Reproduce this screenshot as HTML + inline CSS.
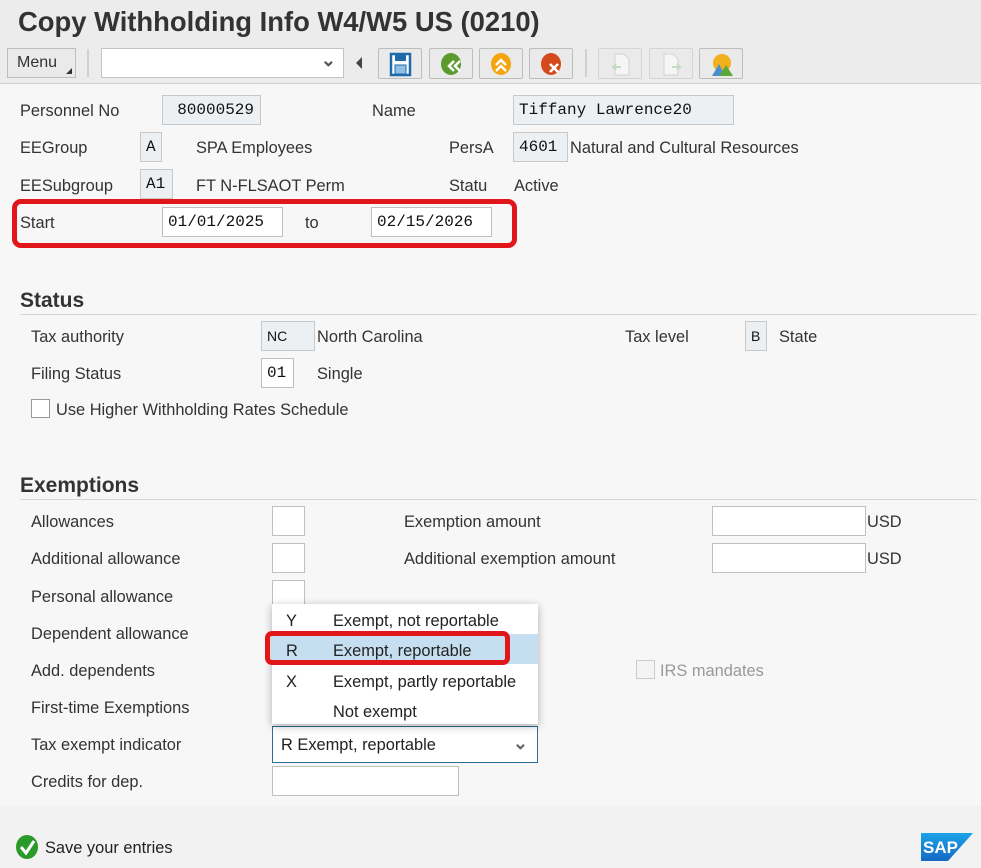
<!DOCTYPE html>
<html><head><style>
*{box-sizing:border-box;margin:0;padding:0}
body{width:981px;height:868px;background:#f7f7f7;font-family:"Liberation Sans",Arial,sans-serif;color:#333;position:relative;overflow:hidden;font-size:16.4px}
.a{position:absolute;white-space:nowrap}
.t{font-size:16.4px;line-height:20px;margin-top:1px}
.ro{position:absolute;background:#edf0f2;border:1px solid #c8c8c8;font-family:"Liberation Mono",monospace;font-size:16px;line-height:28px;padding-left:5px;color:#111}
.in{position:absolute;background:#fff;border:1px solid #bfbfbf;font-family:"Liberation Mono",monospace;font-size:16px;line-height:28px;padding-left:5px;color:#111}
.btn{position:absolute;top:48px;width:44px;height:31px;background:#eaeaea;border:1px solid #bdbdbd;border-radius:2px}
.sec{position:absolute;left:20px;right:4px;font-size:21px;font-weight:bold;color:#333;border-bottom:1px solid #d5d5d5;height:27px;padding-top:1px}
</style></head><body>
<div class="a" style="left:0;top:0;width:981px;height:44px;background:#ececec"></div>
<div class="a" style="left:18px;top:6px;font-size:27.4px;font-weight:bold;color:#333">Copy Withholding Info W4/W5 US (0210)</div>
<div class="a" style="left:0;top:44px;width:981px;height:40px;background:#ececec;border-bottom:1px solid #d0d0d0"></div>
<div class="a" style="left:7px;top:48px;width:69px;height:30px;border:1px solid #bdbdbd;background:#eaeaea;font-size:16px;line-height:28px;padding-left:9px">Menu<span style="position:absolute;right:3px;bottom:3px;width:0;height:0;border-left:6px solid transparent;border-bottom:6px solid #333"></span></div>
<div class="a" style="left:87px;top:49px;width:2px;height:28px;background:#d0d0d0"></div>
<div class="a" style="left:101px;top:48px;width:243px;height:30px;background:#fff;border:1px solid #c4c4c4"><span style="position:absolute;right:7px;top:1px;font-size:18px;font-weight:bold;color:#555">&#8964;</span></div>
<div class="a" style="left:356px;top:57px;width:0;height:0;border-top:6px solid transparent;border-bottom:6px solid transparent;border-right:6px solid #444"></div>
<div class="btn" style="left:378px"><svg width="44" height="31"><rect x="12" y="5" width="19" height="21" fill="#fff" stroke="#1f6aa8" stroke-width="2.5"/><rect x="16" y="5" width="11" height="7" fill="#1f6aa8"/><rect x="16" y="16" width="11" height="9" fill="#8fc0e8" stroke="#1f6aa8"/></svg></div>
<div class="btn" style="left:429px"><svg width="44" height="31"><ellipse cx="21" cy="15" rx="10" ry="11" fill="#5b9a2e"/><path d="M24 12l-5 5 5 5M30 12l-5 5 5 5" stroke="#fff" stroke-width="2.5" fill="none"/></svg></div>
<div class="btn" style="left:479px"><svg width="44" height="31"><ellipse cx="21" cy="15" rx="10" ry="11" fill="#f2a50d"/><path d="M16 16l5-5 5 5M16 22l5-5 5 5" stroke="#fff" stroke-width="2.5" fill="none"/></svg></div>
<div class="btn" style="left:529px"><svg width="44" height="31"><ellipse cx="21" cy="15" rx="10" ry="11" fill="#d4491d"/><path d="M20 15l8 8M28 15l-8 8" stroke="#fff" stroke-width="2.5"/></svg></div>
<div class="a" style="left:585px;top:49px;width:2px;height:28px;background:#d0d0d0"></div>
<div class="btn" style="left:598px;opacity:.5"><svg width="44" height="31"><path d="M16 5h9l5 5v16H16z" fill="#fff" stroke="#bbb"/><path d="M22 18h-8m3-3l-3 3 3 3" stroke="#9c9" stroke-width="2" fill="none"/></svg></div>
<div class="btn" style="left:649px;opacity:.5"><svg width="44" height="31"><path d="M14 5h9l5 5v16H14z" fill="#fff" stroke="#bbb"/><path d="M22 18h8m-3-3l3 3-3 3" stroke="#9c9" stroke-width="2" fill="none"/></svg></div>
<div class="btn" style="left:699px"><svg width="44" height="31"><circle cx="22" cy="14" r="9" fill="#f2b01d"/><path d="M12 27l7-12 6 12z" fill="#4a8fd0"/><path d="M19 27l7-11 7 11z" fill="#5aa83a"/></svg></div>

<div class="a t" style="left:20px;top:100px">Personnel No</div>
<div class="ro" style="left:162px;top:95px;width:99px;height:30px;text-align:right;padding-right:6px">80000529</div>
<div class="a t" style="left:372px;top:100px">Name</div>
<div class="ro" style="left:513px;top:95px;width:221px;height:30px">Tiffany Lawrence20</div>
<div class="a t" style="left:20px;top:137px">EEGroup</div>
<div class="ro" style="left:140px;top:132px;width:22px;height:30px">A</div>
<div class="a t" style="left:196px;top:137px">SPA Employees</div>
<div class="a t" style="left:449px;top:137px">PersA</div>
<div class="ro" style="left:513px;top:132px;width:55px;height:30px">4601</div>
<div class="a t" style="left:570px;top:137px">Natural and Cultural Resources</div>
<div class="a t" style="left:20px;top:175px">EESubgroup</div>
<div class="ro" style="left:140px;top:169px;width:33px;height:30px">A1</div>
<div class="a t" style="left:196px;top:175px">FT N-FLSAOT Perm</div>
<div class="a t" style="left:449px;top:175px">Statu</div>
<div class="a t" style="left:514px;top:175px">Active</div>
<div class="a t" style="left:20px;top:212px">Start</div>
<div class="in" style="left:162px;top:207px;width:121px;height:30px">01/01/2025</div>
<div class="a t" style="left:305px;top:212px">to</div>
<div class="in" style="left:371px;top:207px;width:121px;height:30px">02/15/2026</div>
<div class="a" style="left:12px;top:199px;width:505px;height:49px;border:5px solid #e0161b;border-radius:9px"></div>

<div class="sec" style="top:288px">Status</div>
<div class="a t" style="left:31px;top:326px">Tax authority</div>
<div class="ro" style="left:261px;top:321px;width:54px;height:30px;font-family:'Liberation Sans',sans-serif;font-size:14px">NC</div>
<div class="a t" style="left:317px;top:326px">North Carolina</div>
<div class="a t" style="left:625px;top:326px">Tax level</div>
<div class="ro" style="left:745px;top:321px;width:22px;height:30px;font-family:'Liberation Sans',sans-serif;font-size:14px">B</div>
<div class="a t" style="left:779px;top:326px">State</div>
<div class="a t" style="left:31px;top:363px">Filing Status</div>
<div class="in" style="left:261px;top:358px;width:33px;height:30px">01</div>
<div class="a t" style="left:317px;top:363px">Single</div>
<div class="a" style="left:31px;top:399px;width:19px;height:19px;background:#fff;border:1px solid #999"></div>
<div class="a t" style="left:56px;top:399px">Use Higher Withholding Rates Schedule</div>

<div class="sec" style="top:473px">Exemptions</div>
<div class="a t" style="left:31px;top:511px">Allowances</div>
<div class="in" style="left:272px;top:506px;width:33px;height:30px"></div>
<div class="a t" style="left:404px;top:511px">Exemption amount</div>
<div class="in" style="left:712px;top:506px;width:154px;height:30px"></div>
<div class="a t" style="left:867px;top:511px">USD</div>
<div class="a t" style="left:31px;top:548px">Additional allowance</div>
<div class="in" style="left:272px;top:543px;width:33px;height:30px"></div>
<div class="a t" style="left:404px;top:548px">Additional exemption amount</div>
<div class="in" style="left:712px;top:543px;width:154px;height:30px"></div>
<div class="a t" style="left:867px;top:548px">USD</div>
<div class="a t" style="left:31px;top:586px">Personal allowance</div>
<div class="in" style="left:272px;top:580px;width:33px;height:30px"></div>
<div class="a t" style="left:31px;top:623px">Dependent allowance</div>
<div class="a t" style="left:31px;top:660px">Add. dependents</div>
<div class="a" style="left:636px;top:660px;width:19px;height:19px;background:#f4f4f4;border:1px solid #ccc"></div>
<div class="a t" style="left:660px;top:660px;color:#999">IRS mandates</div>
<div class="a t" style="left:31px;top:697px">First-time Exemptions</div>
<div class="a t" style="left:31px;top:734px">Tax exempt indicator</div>
<div class="a" style="left:272px;top:726px;width:266px;height:37px;background:#fff;border:1px solid #2c6f96;font-size:16.4px;line-height:36px;padding-left:8px;color:#222">R Exempt, reportable<span style="position:absolute;right:9px;top:-2px;font-size:18px;font-weight:bold;color:#666">&#8964;</span></div>
<div class="a t" style="left:31px;top:771px">Credits for dep.</div>
<div class="in" style="left:272px;top:766px;width:187px;height:30px"></div>

<div class="a" style="left:272px;top:604px;width:266px;height:120px;background:#fff;box-shadow:0 2px 8px rgba(0,0,0,.3)">
<div class="a" style="left:0;top:30px;width:266px;height:30px;background:#c6dff0"></div>
<div class="a t" style="left:14px;top:6px;color:#222">Y</div><div class="a t" style="left:61px;top:6px;color:#222">Exempt, not reportable</div>
<div class="a t" style="left:14px;top:36px;color:#222">R</div><div class="a t" style="left:61px;top:36px;color:#222">Exempt, reportable</div>
<div class="a t" style="left:14px;top:67px;color:#222">X</div><div class="a t" style="left:61px;top:67px;color:#222">Exempt, partly reportable</div>
<div class="a t" style="left:61px;top:97px;color:#222">Not exempt</div>
</div>
<div class="a" style="left:265px;top:631px;width:245px;height:34px;border:5px solid #e0161b;border-radius:7px"></div>

<div class="a" style="left:0;top:806px;width:981px;height:62px;background:#f2f2f2"></div>
<svg class="a" style="left:16px;top:835px" width="24" height="24"><ellipse cx="11" cy="12" rx="11" ry="12" fill="#2a9a2a"/><path d="M5 12l5 6 8-12" stroke="#fff" stroke-width="3" fill="none"/></svg>
<div class="a t" style="left:45px;top:837px;color:#222">Save your entries</div>
<svg class="a" style="left:921px;top:833px" width="52" height="28"><defs><linearGradient id="g" x1="0" y1="0" x2="0" y2="1"><stop offset="0" stop-color="#1aa3e8"/><stop offset="1" stop-color="#1668c4"/></linearGradient></defs><path d="M0 0h52L27 28H0z" fill="url(#g)"/><text x="2" y="20" font-family="Liberation Sans" font-weight="bold" font-size="17" fill="#fff">SAP</text></svg>
</body></html>
